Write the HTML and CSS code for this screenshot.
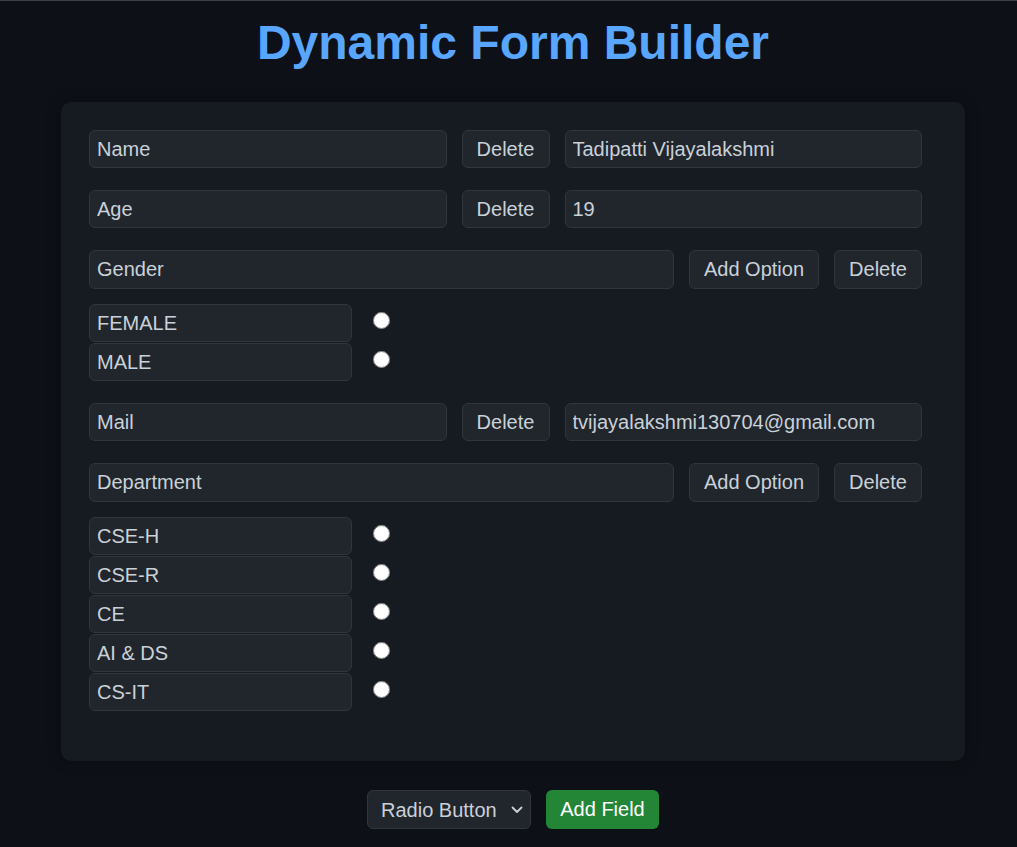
FILE: index.html
```html
<!DOCTYPE html>
<html lang="en">
<head>
<meta charset="utf-8">
<title>Dynamic Form Builder</title>
<link rel="stylesheet" href="styles.css">
</head>
<body>
<div class="page">
  <h1 class="title">Dynamic Form Builder</h1>
  <div class="card">
    <div class="field">
      <div class="row">
        <input class="inp grow" type="text" value="Name">
        <button class="btn w-del">Delete</button>
        <input class="inp grow" type="text" value="Tadipatti Vijayalakshmi">
      </div>
    </div>
    <div class="field">
      <div class="row">
        <input class="inp grow" type="text" value="Age">
        <button class="btn w-del">Delete</button>
        <input class="inp grow" type="text" value="19">
      </div>
    </div>
    <div class="field">
      <div class="row tall">
        <input class="inp grow" type="text" value="Gender">
        <button class="btn w-add">Add Option</button>
        <button class="btn w-del">Delete</button>
      </div>
      <div class="options">
        <div class="opt"><input class="inp opt-inp" type="text" value="FEMALE"><input class="radio" type="radio" name="g"></div>
        <div class="opt"><input class="inp opt-inp" type="text" value="MALE"><input class="radio" type="radio" name="g"></div>
      </div>
    </div>
    <div class="field">
      <div class="row">
        <input class="inp grow" type="text" value="Mail">
        <button class="btn w-del">Delete</button>
        <input class="inp grow" type="text" value="tvijayalakshmi130704@gmail.com">
      </div>
    </div>
    <div class="field">
      <div class="row tall">
        <input class="inp grow" type="text" value="Department">
        <button class="btn w-add">Add Option</button>
        <button class="btn w-del">Delete</button>
      </div>
      <div class="options">
        <div class="opt"><input class="inp opt-inp" type="text" value="CSE-H"><input class="radio" type="radio" name="d"></div>
        <div class="opt"><input class="inp opt-inp" type="text" value="CSE-R"><input class="radio" type="radio" name="d"></div>
        <div class="opt"><input class="inp opt-inp" type="text" value="CE"><input class="radio" type="radio" name="d"></div>
        <div class="opt"><input class="inp opt-inp" type="text" value="AI &amp; DS"><input class="radio" type="radio" name="d"></div>
        <div class="opt"><input class="inp opt-inp" type="text" value="CS-IT"><input class="radio" type="radio" name="d"></div>
      </div>
    </div>
  </div>
  <div class="controls">
    <div class="sel-wrap">
      <select class="sel">
        <option>Radio Button</option>
        <option>Text</option>
      </select>
      <svg class="chev" width="12" height="8" viewBox="0 0 12 8"><path d="M1.5 1.5 L6 6 L10.5 1.5" fill="none" stroke="#c9d1d9" stroke-width="1.8" stroke-linecap="round" stroke-linejoin="round"/></svg>
    </div>
    <button class="add-field">Add Field</button>
  </div>
</div>
</body>
</html>
```

FILE: styles.css
```css
html {
  background: #0d1117;
}
body {
  margin: 0;
  border-top: 1px solid #3b4047;
  background: #0d1117;
  font-family: "Liberation Sans", Arial, sans-serif;
  color: #c9d1d9;
  min-height: 846px;
  box-sizing: border-box;
}
.page {
  padding-left: 9px;
  padding-top: 14px;
  display: flex;
  flex-direction: column;
  align-items: center;
}
.title {
  margin: 0 0 32px;
  font-size: 48px;
  font-weight: bold;
  color: #58a6ff;
  line-height: 55px;
}
.card {
  width: 904px;
  box-sizing: border-box;
  background: #161b22;
  border-radius: 10px;
  padding: 28px 43px 50px 28px;
  display: flex;
  flex-direction: column;
  gap: 22px;
  box-shadow: 0 0 14px rgba(0, 0, 0, 0.35);
}
.field {
  display: flex;
  flex-direction: column;
}
.row {
  display: flex;
  gap: 15px;
  height: 38px;
}
.row.tall {
  height: 39px;
}
.inp {
  box-sizing: border-box;
  height: 100%;
  background: #21262d;
  border: 1px solid #30363d;
  border-radius: 6px;
  color: #c9d1d9;
  font-family: "Liberation Sans", Arial, sans-serif;
  font-size: 20px;
  padding: 0 7px;
  outline: none;
}
.grow {
  flex: 1 1 0;
  min-width: 0;
}
.btn {
  box-sizing: border-box;
  height: 100%;
  background: #21262d;
  border: 1px solid #30363d;
  border-radius: 6px;
  color: #c9d1d9;
  font-family: "Liberation Sans", Arial, sans-serif;
  font-size: 20px;
  padding: 0;
  flex: none;
}
.w-del { width: 88px; }
.w-add { width: 130px; }
.options {
  margin-top: 15px;
  display: flex;
  flex-direction: column;
  gap: 1px;
}
.opt {
  display: flex;
  align-items: flex-start;
  height: 38px;
}
.opt-inp {
  width: 263px;
  height: 38px;
}
.radio {
  width: 17px;
  height: 17px;
  margin: 8px 0 0 21px;
  accent-color: #58a6ff;
}
.controls {
  margin-top: 29px;
  display: flex;
  gap: 15px;
  align-items: center;
}
.sel-wrap {
  position: relative;
  display: flex;
}
.sel {
  box-sizing: border-box;
  width: 164px;
  height: 39px;
  background: #21262d;
  border: 1px solid #30363d;
  border-radius: 6px;
  color: #c9d1d9;
  font-family: "Liberation Sans", Arial, sans-serif;
  font-size: 20px;
  padding: 0 28px 0 13px;
  appearance: none;
  -webkit-appearance: none;
  outline: none;
}
.chev {
  position: absolute;
  right: 8px;
  top: 16px;
  pointer-events: none;
}
.add-field {
  box-sizing: border-box;
  width: 113px;
  height: 39px;
  background: #238636;
  border: none;
  border-radius: 6px;
  color: #ffffff;
  font-family: "Liberation Sans", Arial, sans-serif;
  font-size: 20px;
  padding: 0;
}
```
